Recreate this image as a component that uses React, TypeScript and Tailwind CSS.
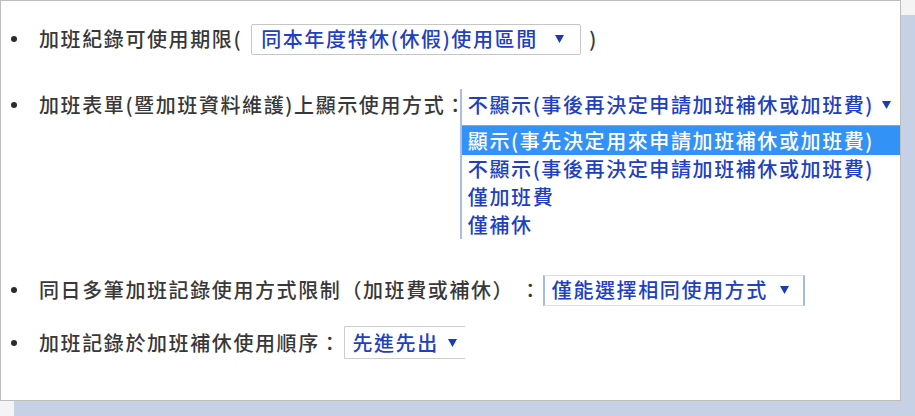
import React from "react";

const FONT = { fontFamily: '"Noto Sans CJK TC", "Noto Sans", sans-serif' };

function Arrow() {
  return (
    <svg width="9" height="8" viewBox="0 0 9 8" className="shrink-0">
      <path d="M0 0 H9 L4.5 8 Z" fill="#1a3ab8" />
    </svg>
  );
}

function Bullet() {
  return <span className="ml-[10px] mr-[22px] h-[6px] w-[6px] shrink-0 rounded-full bg-[#2b2b2b]" />;
}

const label = "text-[20px] font-medium tracking-[1.6px] text-[#383838] leading-none whitespace-nowrap";
const blue = "text-[20px] font-medium tracking-[1.6px] text-[#2140c0] leading-none whitespace-nowrap";

export default function App() {
  return (
    <div className="h-[416px] w-[915px] overflow-hidden bg-[#f4f4f4]" style={FONT}>
      <div className="h-[401px] w-[901px] overflow-hidden border border-[#bdbdbd] bg-white shadow-[14px_15px_0_0_#c6d1e5]">
        <ul className="flex flex-col pt-[22px]">
          {/* Row 1 */}
          <li className="flex h-[32px] items-center">
            <Bullet />
            <span className={label}>加班紀錄可使用期限(</span>
            <div className="ml-[9px] flex h-[31px] w-[330px] items-center rounded-[2px] border border-[#c6c6c6] pl-[9px] pr-[16px]">
              <span className={blue}>同本年度特休(休假)使用區間</span>
              <span className="flex-1" />
              <Arrow />
            </div>
            <span className={label + " ml-[8px]"}>)</span>
          </li>

          {/* Row 2 */}
          <li className="mt-[34px] flex h-[32px] items-center">
            <Bullet />
            <span className={label}>加班表單(暨加班資料維護)上顯示使用方式：</span>
            <div className="relative ml-[-7px] h-[32px] w-[450px]">
              <div className="flex h-full items-center border-l-2 border-[#a9bde6] pl-[6px] pr-[10px]">
                <span className={blue}>不顯示(事後再決定申請加班補休或加班費)</span>
                <span className="ml-[8px]"><Arrow /></span>
              </div>
              <div className="absolute left-0 top-[32px] w-[450px] border-l-2 border-[#a9bde6] pt-[4px]">
                <div className="h-[114px] overflow-hidden border-t border-[#9aa3b5]">
                  <div className="flex h-[29px] items-center bg-[#3392f5] pl-[6px]">
                    <span className="text-[20px] font-medium tracking-[1.6px] text-white leading-none whitespace-nowrap">顯示(事先決定用來申請加班補休或加班費)</span>
                  </div>
                  <div className="flex h-[28px] items-center pl-[6px]">
                    <span className={blue}>不顯示(事後再決定申請加班補休或加班費)</span>
                  </div>
                  <div className="flex h-[28px] items-center pl-[6px]">
                    <span className={blue}>僅加班費</span>
                  </div>
                  <div className="flex h-[28px] items-center pl-[6px]">
                    <span className={blue}>僅補休</span>
                  </div>
                </div>
              </div>
            </div>
          </li>

          {/* Row 3 */}
          <li className="mt-[153px] flex h-[32px] items-center">
            <Bullet />
            <span className={label}>同日多筆加班記錄使用方式限制（加班費或補休）</span>
            <span className={label + " ml-[6px]"}>：</span>
            <div className="ml-[1px] flex h-[31px] w-[262px] items-center border-x-2 border-y border-x-[#a3b9e6] border-y-[#d7deee] pl-[7px] pr-[14px]">
              <span className={blue}>僅能選擇相同使用方式</span>
              <span className="flex-1" />
              <Arrow />
            </div>
          </li>

          {/* Row 4 */}
          <li className="mt-[20px] flex h-[33px] items-center">
            <Bullet />
            <span className={label}>加班記錄於加班補休使用順序：</span>
            <div className="ml-[3px] flex h-[33px] w-[121px] items-center rounded-l-[2px] border-y border-l border-[#cdcdcd] pl-[7px] pr-[8px]">
              <span className={blue}>先進先出</span>
              <span className="flex-1" />
              <Arrow />
            </div>
          </li>
        </ul>
      </div>
    </div>
  );
}
